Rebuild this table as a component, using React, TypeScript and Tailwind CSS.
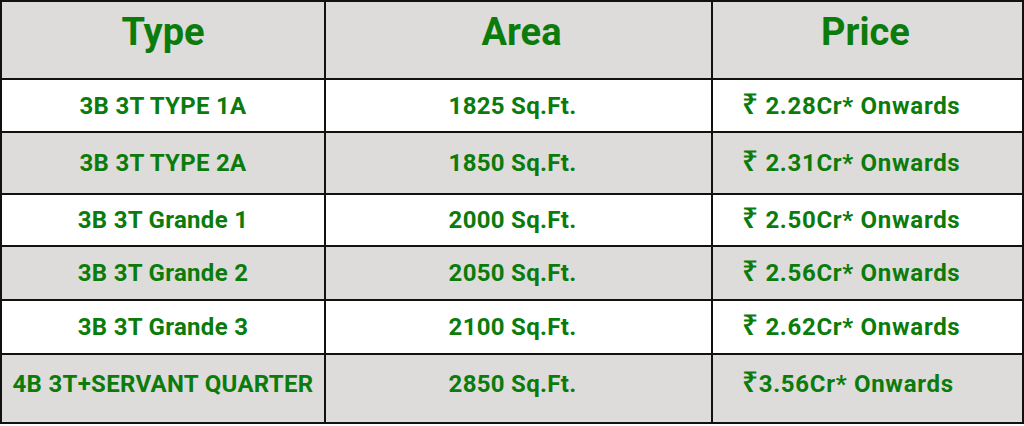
const rows = [
  { type: "3B 3T TYPE 1A", area: "1825 Sq.Ft.", price: "2.28Cr* Onwards", h: "h-[53px]", bg: "bg-white" },
  { type: "3B 3T TYPE 2A", area: "1850 Sq.Ft.", price: "2.31Cr* Onwards", h: "h-[62px]", bg: "bg-[#dedcdb]" },
  { type: "3B 3T Grande 1", area: "2000 Sq.Ft.", price: "2.50Cr* Onwards", h: "h-[52px]", bg: "bg-white" },
  { type: "3B 3T Grande 2", area: "2050 Sq.Ft.", price: "2.56Cr* Onwards", h: "h-[54px]", bg: "bg-[#dedcdb]" },
  { type: "3B 3T Grande 3", area: "2100 Sq.Ft.", price: "2.62Cr* Onwards", h: "h-[54px]", bg: "bg-white" },
];

function Rupee() {
  return <span className="font-['Noto_Sans',sans-serif] font-semibold text-[28px] leading-none">₹</span>;
}

export default function App() {
  return (
    <div className="w-[1024px] h-[426px] bg-white font-['Roboto',sans-serif] font-bold text-[#0b7b0b]">
      <table className="w-full table-fixed border-collapse border-2 border-[#111]">
        <colgroup>
          <col className="w-[324px]" />
          <col className="w-[387px]" />
          <col />
        </colgroup>
        <thead>
          <tr className="h-[78px] bg-[#dedcdb] text-[38px]">
            <th className="border-2 border-[#111] pb-[16px]">Type</th>
            <th className="border-2 border-[#111] pb-[16px] pl-[6px]">Area</th>
            <th className="border-2 border-[#111] pb-[16px] pr-[4px]">Price</th>
          </tr>
        </thead>
        <tbody className="text-[24px] tracking-[0.3px]">
          {rows.map((r) => (
            <tr key={r.type} className={`${r.h} ${r.bg}`}>
              <td className="border-2 border-[#111] text-center">{r.type}</td>
              <td className="border-2 border-[#111] text-center pr-[12px]">{r.area}</td>
              <td className="border-2 border-[#111] pl-[29px] tracking-[0.7px]">
                <Rupee /> {r.price}
              </td>
            </tr>
          ))}
          <tr className="h-[69px] bg-[#dedcdb]">
            <td className="border-2 border-[#111] text-center pb-[9px]">4B 3T+SERVANT QUARTER</td>
            <td className="border-2 border-[#111] text-center pr-[12px] pb-[9px]">2850 Sq.Ft.</td>
            <td className="border-2 border-[#111] pl-[29px] pb-[9px] tracking-[0.7px]">
              <Rupee />
              {"3.56Cr* Onwards"}
            </td>
          </tr>
        </tbody>
      </table>
    </div>
  );
}
